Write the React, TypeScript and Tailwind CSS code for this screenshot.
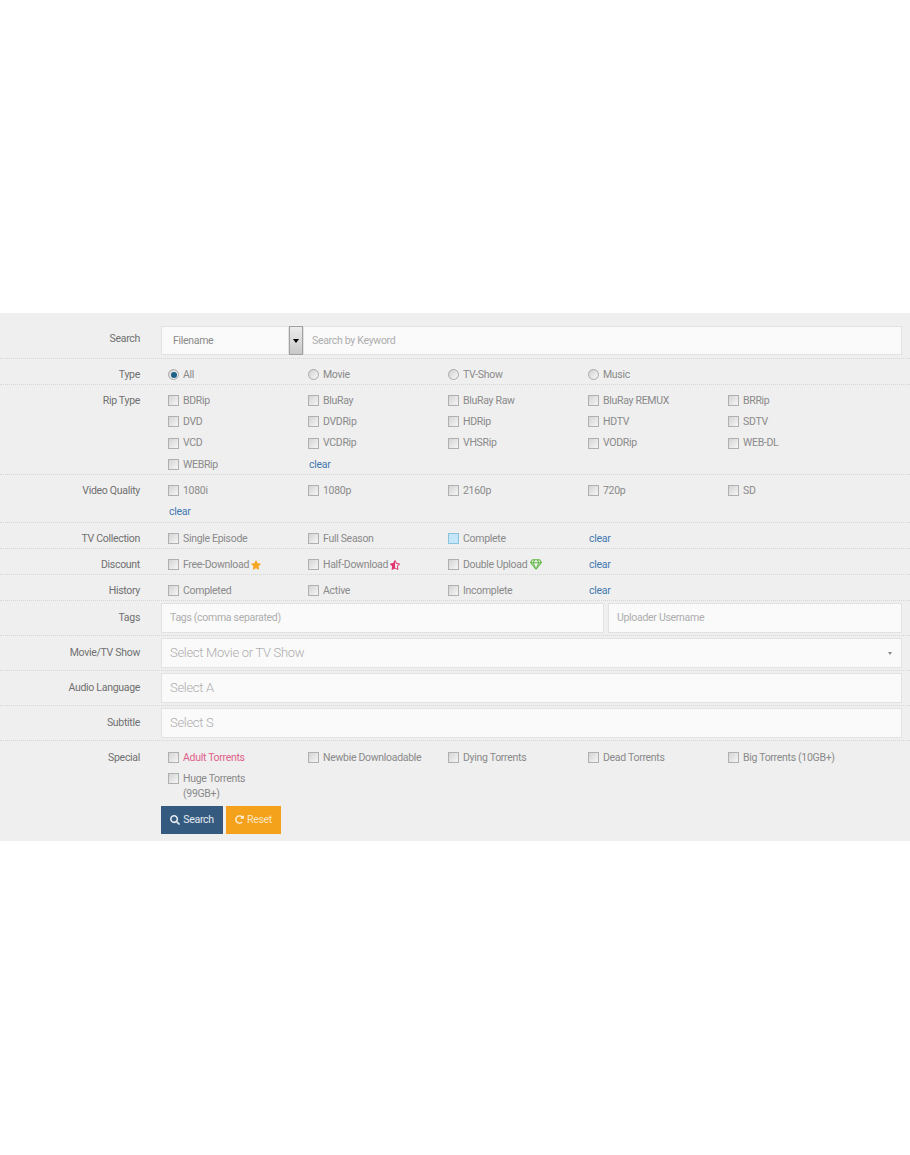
import React from 'react'
import { FaRedoAlt, FaRegGem, FaSearch, FaStar, FaStarHalfAlt } from 'react-icons/fa'

const Checkbox = ({ active = false }: { active?: boolean }) => (
  <span
    className={`w-[11px] h-[11px] shrink-0 border ${
      active
        ? 'border-[#8cc4e0] bg-[#c4e6f8]'
        : 'border-[#b0b0b0] bg-gradient-to-br from-[#d4d4d4] to-[#f6f6f6]'
    }`}
  />
)

const Radio = ({ checked = false }: { checked?: boolean }) => (
  <span className="w-[11px] h-[11px] shrink-0 rounded-full border border-[#a8a8a8] bg-gradient-to-br from-[#d2d2d2] to-[#f8f8f8] flex items-center justify-center">
    {checked && <span className="w-[6px] h-[6px] rounded-full bg-[#1d6286]" />}
  </span>
)

const Option = ({
  label,
  active,
  className = '',
  children,
}: {
  label: string
  active?: boolean
  className?: string
  children?: React.ReactNode
}) => (
  <div className="flex items-center h-[21.3px]">
    <Checkbox active={active} />
    <span className={`ml-[4px] whitespace-nowrap ${className}`}>{label}</span>
    {children}
  </div>
)

const RadioOption = ({ label, checked }: { label: string; checked?: boolean }) => (
  <div className="flex items-center h-[21.3px]">
    <Radio checked={checked} />
    <span className="ml-[4px]">{label}</span>
  </div>
)

const Clear = () => (
  <div className="flex items-center h-[21.3px] pl-[1px] text-[#4278b0]">clear</div>
)

const Row = ({
  label,
  className = '',
  labelClass = '',
  children,
}: {
  label: string
  className?: string
  labelClass?: string
  children: React.ReactNode
}) => (
  <div className={`flex border-b border-dotted border-[#d6d6d6] ${className}`}>
    <div className={`w-[140px] shrink-0 text-right text-[#707070] ${labelClass}`}>
      {label}
    </div>
    {children}
  </div>
)

const Options = ({ className = '', children }: { className?: string; children: React.ReactNode }) => (
  <div className={`ml-[28px] grid grid-cols-[repeat(5,140px)] ${className}`}>{children}</div>
)

const inputClass =
  'h-[30px] flex items-center bg-[#fafafa] border border-[#e2e2e2] text-[#adadad]'

export default function App() {
  return (
    <div
      className="w-[910px] h-[1155px] bg-white text-[10.5px] tracking-[-0.3px] text-[#8a8a8a]"
      style={{ fontFamily: 'Roboto, "Liberation Sans", sans-serif' }}>
      <div className="h-[313px]" />
      <div className="h-[528px] bg-[#efefef]">
        <Row label="Search" className="h-[46px] pt-[13px]" labelClass="pt-[5px]">
          <div className="ml-[21px] w-[741px] flex h-[29px]">
            <div className="w-[128px] flex items-center pl-[11px] bg-[#fafafa] border border-[#e2e2e2] text-[#8a8a8a]">
              Filename
            </div>
            <div className="w-[14px] flex items-center justify-center border border-[#a0a0a0] bg-gradient-to-b from-[#ececec] to-[#c8c8c8]">
              <span className="w-0 h-0 border-x-[3.5px] border-x-transparent border-t-[4px] border-t-black" />
            </div>
            <div className="flex-1 flex items-center pl-[8px] bg-[#fafafa] border border-[#e2e2e2] text-[#adadad]">
              Search by Keyword
            </div>
          </div>
        </Row>

        <Row label="Type" className="h-[26px] pt-[5px]" labelClass="pt-[3px]">
          <Options>
            <RadioOption label="All" checked />
            <RadioOption label="Movie" />
            <RadioOption label="TV-Show" />
            <RadioOption label="Music" />
          </Options>
        </Row>

        <Row label="Rip Type" className="h-[90px] pt-[5px]" labelClass="pt-[3px]">
          <Options>
            {['BDRip', 'BluRay', 'BluRay Raw', 'BluRay REMUX', 'BRRip', 'DVD', 'DVDRip', 'HDRip', 'HDTV', 'SDTV', 'VCD', 'VCDRip', 'VHSRip', 'VODRip', 'WEB-DL', 'WEBRip'].map((item) => (
              <Option key={item} label={item} />
            ))}
            <Clear />
          </Options>
        </Row>

        <Row label="Video Quality" className="h-[48px] pt-[5px]" labelClass="pt-[3px]">
          <Options>
            {['1080i', '1080p', '2160p', '720p', 'SD'].map((item) => (
              <Option key={item} label={item} />
            ))}
            <Clear />
          </Options>
        </Row>

        <Row label="TV Collection" className="h-[26px] pt-[5px]" labelClass="pt-[3px]">
          <Options>
            <Option label="Single Episode" />
            <Option label="Full Season" />
            <Option label="Complete" active />
            <Clear />
          </Options>
        </Row>

        <Row label="Discount" className="h-[26px] pt-[5px]" labelClass="pt-[3px]">
          <Options>
            <Option label="Free-Download">
              <FaStar className="ml-[2px] w-[10px] h-[10px] text-[#f5a623]" />
            </Option>
            <Option label="Half-Download">
              <FaStarHalfAlt className="ml-[2px] w-[10px] h-[10px] text-[#e0336f]" />
            </Option>
            <Option label="Double Upload">
              <FaRegGem className="ml-[3px] w-[12px] h-[11px] text-[#62b846]" />
            </Option>
            <Clear />
          </Options>
        </Row>

        <Row label="History" className="h-[26px] pt-[5px]" labelClass="pt-[3px]">
          <Options>
            <Option label="Completed" />
            <Option label="Active" />
            <Option label="Incomplete" />
            <Clear />
          </Options>
        </Row>

        <Row label="Tags" className="h-[35px] pt-[2px]" labelClass="pt-[7px]">
          <div className="ml-[21px] w-[741px] flex gap-[4px]">
            <div className={`${inputClass} w-[443px] pl-[8px]`}>Tags (comma separated)</div>
            <div className={`${inputClass} flex-1 pl-[8px]`}>Uploader Username</div>
          </div>
        </Row>

        <Row label="Movie/TV Show" className="h-[35px] pt-[2px]" labelClass="pt-[7px]">
          <div className={`${inputClass} ml-[21px] w-[741px] pl-[8px] pr-[9px] justify-between text-[13px] font-light`}>
            <span>Select Movie or TV Show</span>
            <span className="w-0 h-0 border-x-[2.5px] border-x-transparent border-t-[3px] border-t-[#888888]" />
          </div>
        </Row>

        <Row label="Audio Language" className="h-[35px] pt-[2px]" labelClass="pt-[7px]">
          <div className={`${inputClass} ml-[21px] w-[741px] pl-[8px] text-[13px] font-light`}>
            <span>Select A</span>
          </div>
        </Row>

        <Row label="Subtitle" className="h-[35px] pt-[2px]" labelClass="pt-[7px]">
          <div className={`${inputClass} ml-[21px] w-[741px] pl-[8px] text-[13px] font-light`}>
            <span>Select S</span>
          </div>
        </Row>

        <div className="flex pt-[6px]">
          <div className="w-[140px] shrink-0 text-right text-[#707070] pt-[3px]">Special</div>
          <div className="ml-[21px]">
            <div className="pl-[7px] grid grid-cols-[repeat(5,140px)]">
              <Option label="Adult Torrents" className="text-[#e0608a]" />
              <Option label="Newbie Downloadable" />
              <Option label="Dying Torrents" />
              <Option label="Dead Torrents" />
              <Option label="Big Torrents (10GB+)" />
              <div>
                <Option label="Huge Torrents" />
                <div className="pl-[15px] leading-[10px] h-[12px] -mt-[1px]">(99GB+)</div>
              </div>
            </div>
            <div className="flex gap-[3px] mt-[5px]">
              <button className="w-[62px] h-[28px] flex items-center justify-center gap-[3px] bg-[#355a80] text-[#e6ebf0]">
                <FaSearch className="w-[10px] h-[10px]" />
                Search
              </button>
              <button className="w-[55px] h-[28px] flex items-center justify-center gap-[3px] bg-[#f4a11c] text-[#fbe6c3]">
                <FaRedoAlt className="w-[9px] h-[9px] text-[#fff3de]" />
                Reset
              </button>
            </div>
          </div>
        </div>
      </div>
    </div>
  )
}
